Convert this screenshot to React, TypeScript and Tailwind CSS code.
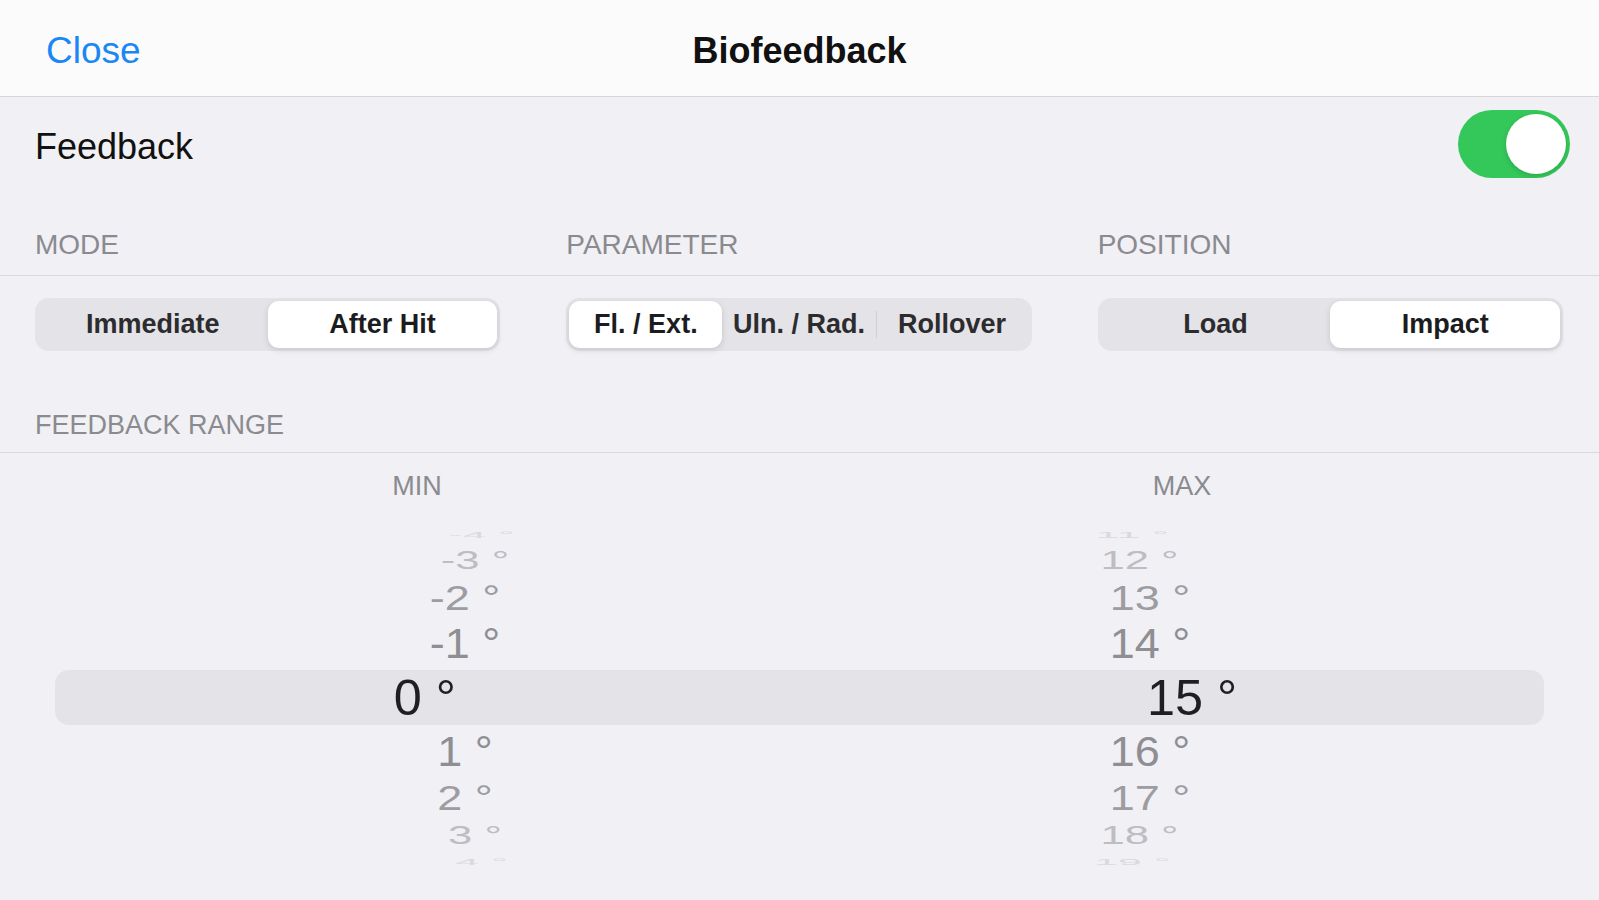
import { useState } from 'react';

type PickerRow = {
  min: string;
  max: string;
  h: number;
  sx: number;
  sy: number;
  color: string;
  selected?: boolean;
};

const pickerRows: PickerRow[] = [
  { min: '-4 °', max: '11 °', h: 16, sx: 0.95, sy: 0.22, color: '#dadade' },
  { min: '-3 °', max: '12 °', h: 36, sx: 0.97, sy: 0.56, color: '#bdbdc2' },
  { min: '-2 °', max: '13 °', h: 39, sx: 1, sy: 0.79, color: '#9c9ca1' },
  { min: '-1 °', max: '14 °', h: 53, sx: 1, sy: 0.94, color: '#8e8e93' },
  { min: '0 °', max: '15 °', h: 55, sx: 1.12, sy: 1.12, color: '#1f1f21', selected: true },
  { min: '1 °', max: '16 °', h: 53, sx: 1, sy: 0.94, color: '#8e8e93' },
  { min: '2 °', max: '17 °', h: 39, sx: 1, sy: 0.79, color: '#9c9ca1' },
  { min: '3 °', max: '18 °', h: 36, sx: 0.97, sy: 0.56, color: '#bdbdc2' },
  { min: '4 °', max: '19 °', h: 16, sx: 0.95, sy: 0.22, color: '#dadade' },
];

function Segmented({ options, value, onChange }: { options: string[]; value: number; onChange: (i: number) => void }) {
  return (
    <div className="flex h-[53px] rounded-[14px] bg-[#e3e3e8] p-[3px]">
      {options.map((opt, i) => {
        const active = i === value;
        const showDivider = i > 0 && !active && i - 1 !== value;
        return (
          <div key={opt} className="relative flex flex-1">
            {showDivider && <div className="absolute left-0 top-[10px] bottom-[10px] w-px bg-[#cfcfd4]" />}
            <button
              onClick={() => onChange(i)}
              className={
                active
                  ? 'flex-1 rounded-[11px] bg-white text-[27px] font-bold text-[#1c1c1e] shadow-[0_2px_6px_rgba(0,0,0,0.13)]'
                  : 'flex-1 rounded-[11px] text-[27px] font-bold text-[#2c2c2e]'
              }
            >
              {opt}
            </button>
          </div>
        );
      })}
    </div>
  );
}

export default function App() {
  const [feedback, setFeedback] = useState(true);
  const [mode, setMode] = useState(1);
  const [param, setParam] = useState(0);
  const [position, setPosition] = useState(1);

  return (
    <main className="min-h-screen w-full bg-[#f0f0f5] font-['Liberation_Sans',Arial,sans-serif]">
      {/* nav bar */}
      <div className="relative flex h-[97px] items-center justify-center border-b border-[#d6d6db] bg-[#fbfbfc] pt-[6px]">
        <button className="absolute left-[46px] text-[37px] text-[#1a87f5]">Close</button>
        <h1 className="text-[36px] font-bold text-[#111]">Biofeedback</h1>
      </div>

      {/* feedback switch */}
      <div className="flex h-[94px] items-center justify-between pl-[35px] pr-[29px]">
        <span className="pt-[5px] text-[36px] text-[#111]">Feedback</span>
        <button
          onClick={() => setFeedback(!feedback)}
          className={`flex h-[68px] w-[112px] items-center rounded-full p-[4px] ${feedback ? 'justify-end bg-[#34c759]' : 'justify-start bg-[#e5e5ea]'}`}
        >
          <span className="h-[60px] w-[60px] rounded-full bg-white shadow-[0_2px_5px_rgba(0,0,0,0.15)]" />
        </button>
      </div>

      {/* section headers */}
      <div className="grid h-[85px] grid-cols-3 items-end gap-[66px] border-b border-[#d8d8dd] pb-[13px] pl-[35px] pr-[36px]">
        <span className="text-[28px] leading-[34px] text-[#8a8a8f]">MODE</span>
        <span className="text-[28px] leading-[34px] text-[#8a8a8f]">PARAMETER</span>
        <span className="text-[28px] leading-[34px] text-[#8a8a8f]">POSITION</span>
      </div>

      <div className="grid grid-cols-3 gap-[66px] pl-[35px] pr-[36px] pt-[22px]">
        <Segmented options={['Immediate', 'After Hit']} value={mode} onChange={setMode} />
        <Segmented options={['Fl. / Ext.', 'Uln. / Rad.', 'Rollover']} value={param} onChange={setParam} />
        <Segmented options={['Load', 'Impact']} value={position} onChange={setPosition} />
      </div>

      <div className="flex h-[102px] items-end border-b border-[#d8d8dd] pb-[10px] pl-[35px]">
        <span className="text-[27px] leading-[34px] text-[#8a8a8f]">FEEDBACK RANGE</span>
      </div>

      {/* picker */}
      <div className="grid grid-cols-[834px_696px] pt-[16px] text-center text-[27px] leading-[34px] text-[#8a8a8f]">
        <span>MIN</span>
        <span>MAX</span>
      </div>

      <div className="mt-[23px] flex flex-col">
        {pickerRows.map((row) => (
          <div
            key={row.min}
            className={
              row.selected
                ? 'mx-[55px] flex items-center rounded-[14px] bg-[#e3e3e8]'
                : 'flex items-center px-[55px]'
            }
            style={{ height: row.h }}
          >
            <div
              className="grid w-full grid-cols-[820px_550px] text-center text-[45px] leading-none"
              style={{ transform: `scale(${row.sx}, ${row.sy})`, color: row.color }}
            >
              <span>{row.min}</span>
              <span>{row.max}</span>
            </div>
          </div>
        ))}
      </div>
    </main>
  );
}
